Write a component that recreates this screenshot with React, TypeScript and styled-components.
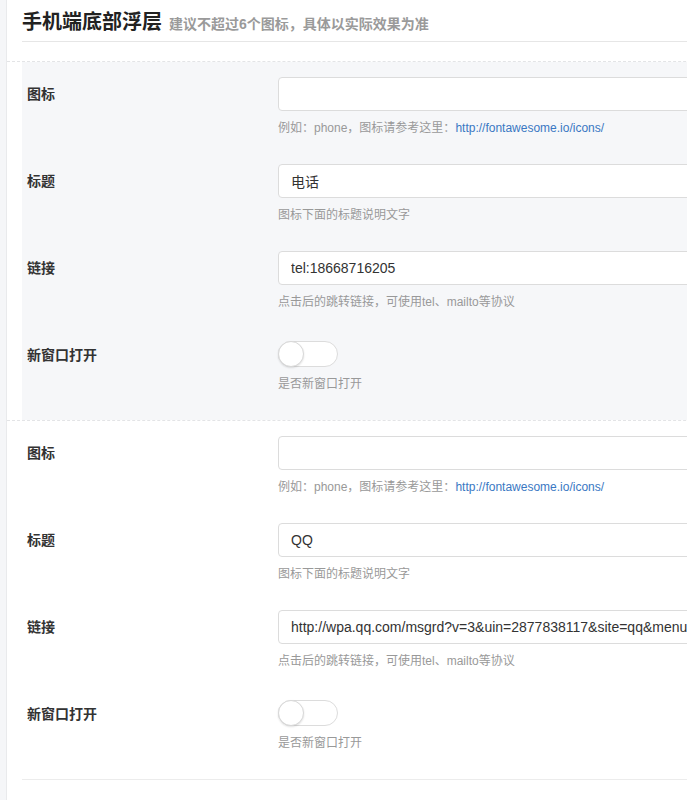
import React from "react";
import styled, { createGlobalStyle } from "styled-components";

interface FieldData {
    label: string;
    kind: "text" | "switch";
    value?: string;
    help: string;
    link?: string;
}

const GlobalStyle = createGlobalStyle`
html, body {
    margin: 0;
    padding: 0;
    background: #f5f6f8;
    overflow: hidden;
}
body {
    font-family: "Liberation Sans", "Noto Sans CJK SC", sans-serif;
    color: #333;
}
`;

const groups: FieldData[][] = [
    [
        { label: "图标", kind: "text", value: "", help: "例如：phone，图标请参考这里：", link: "http://fontawesome.io/icons/" },
        { label: "标题", kind: "text", value: "电话", help: "图标下面的标题说明文字" },
        { label: "链接", kind: "text", value: "tel:18668716205", help: "点击后的跳转链接，可使用tel、mailto等协议" },
        { label: "新窗口打开", kind: "switch", help: "是否新窗口打开" },
    ],
    [
        { label: "图标", kind: "text", value: "", help: "例如：phone，图标请参考这里：", link: "http://fontawesome.io/icons/" },
        { label: "标题", kind: "text", value: "QQ", help: "图标下面的标题说明文字" },
        { label: "链接", kind: "text", value: "http://wpa.qq.com/msgrd?v=3&uin=2877838117&site=qq&menu=yes", help: "点击后的跳转链接，可使用tel、mailto等协议" },
        { label: "新窗口打开", kind: "switch", help: "是否新窗口打开" },
    ],
];

const App = () => {
    return (
        <>
            <GlobalStyle />
            <Panel>
                <Header>
                    <Title>手机端底部浮层</Title>
                    <SubTitle>建议不超过6个图标，具体以实际效果为准</SubTitle>
                </Header>
                {groups.map((fields, gi) => (
                    <Group key={gi}>
                        <GroupBody shaded={gi === 0}>
                            {fields.map((f, fi) => (
                                <Field key={fi}>
                                    <Label>{f.label}</Label>
                                    <Control>
                                        {f.kind === "text" ? (
                                            <Input type="text" defaultValue={f.value} readOnly />
                                        ) : (
                                            <SwitchWrap>
                                                <Switch>
                                                    <Knob />
                                                </Switch>
                                            </SwitchWrap>
                                        )}
                                        <Help>
                                            {f.help}
                                            {f.link && <HelpLink href="#">{f.link}</HelpLink>}
                                        </Help>
                                    </Control>
                                </Field>
                            ))}
                        </GroupBody>
                    </Group>
                ))}
                <Footer />
            </Panel>
        </>
    );
};

const Panel = styled.div`
    margin-left: 6px;
    width: 1200px;
    min-height: 800px;
    background: #fff;
    border-left: 1px solid #e9eaec;
`;

const Header = styled.div`
    margin-left: 15px;
    padding: 8px 0 3px;
    border-bottom: 1px solid #e6e6e6;
    margin-bottom: 19px;
    display: flex;
    align-items: baseline;
    line-height: 28px;
`;

const Title = styled.h2`
    margin: 0;
    font-size: 20px;
    font-weight: bold;
    color: #222;
`;

const SubTitle = styled.span`
    margin-left: 7px;
    font-size: 14px;
    font-weight: bold;
    color: #9a9a9a;
`;

const Group = styled.div`
    border-top: 1px dashed #e3e4e6;
`;

const GroupBody = styled.div<{ shaded: boolean }>`
    margin-left: 15px;
    padding-bottom: 15px;
    background: ${props => (props.shaded ? "#f6f7f9" : "transparent")};
`;

const Field = styled.div`
    display: grid;
    grid-template-columns: 256px 1fr;
    padding: 15px 0 12px;
`;

const Label = styled.div`
    padding-left: 5px;
    font-size: 14px;
    font-weight: bold;
    color: #333;
    line-height: 34px;
`;

const Control = styled.div`
    display: flex;
    flex-direction: column;
`;

const Input = styled.input`
    box-sizing: border-box;
    width: 700px;
    height: 34px;
    padding: 0 12px;
    border: 1px solid #dcdcdc;
    border-radius: 4px;
    background: #fff;
    font-family: "Liberation Sans", "Noto Sans CJK SC", sans-serif;
    font-size: 14px;
    color: #333;
    outline: none;
`;

const SwitchWrap = styled.div`
    padding-top: 3px;
    height: 26px;
`;

const Switch = styled.div`
    position: relative;
    box-sizing: border-box;
    width: 60px;
    height: 26px;
    border: 1px solid #dcdcdc;
    border-radius: 13px;
    background: #fff;
`;

const Knob = styled.span`
    position: absolute;
    left: -1px;
    top: -1px;
    box-sizing: border-box;
    width: 26px;
    height: 26px;
    border-radius: 50%;
    background: #fff;
    border: 1px solid #d8d8d8;
    box-shadow: 0 1px 2px rgba(0, 0, 0, 0.12);
`;

const Help = styled.div`
    margin-top: 8px;
    font-size: 12px;
    line-height: 18px;
    color: #999;
`;

const HelpLink = styled.a`
    color: #3a78c3;
    text-decoration: none;
`;

const Footer = styled.div`
    margin-left: 15px;
    border-top: 1px solid #ececec;
`;

export default App;
